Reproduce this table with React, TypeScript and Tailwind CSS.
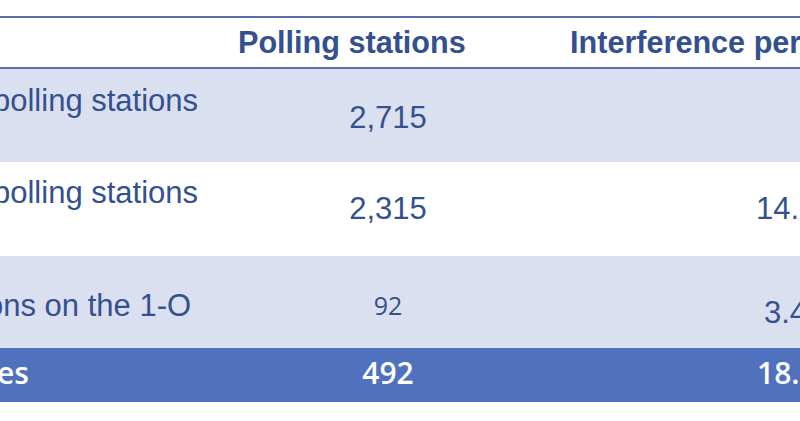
import React from 'react'

type Row = {
  label: string
  labelClass: string
  value: string
  valueClass: string
  pct: string
  pctClass: string
  rowClass: string
}

const arial = "font-['Liberation_Sans',Arial,sans-serif]"
const calibri = "font-['Open_Sans','Noto_Sans',sans-serif]"

const rows: Row[] = [
  {
    label: 'polling stations',
    labelClass: `${arial} text-[31px] ml-[-7px] pt-[16px]`,
    value: '2,715',
    valueClass: `${arial} text-[31px] pt-[33px]`,
    pct: '',
    pctClass: '',
    rowClass: 'h-[93px] bg-[#dbe0f1] text-[#34508f]',
  },
  {
    label: 'polling stations',
    labelClass: `${arial} text-[31px] ml-[-7px] pt-[15px]`,
    value: '2,315',
    valueClass: `${arial} text-[31px] pt-[31px]`,
    pct: '14.',
    pctClass: `${arial} text-[31px] pt-[31px] pl-[210px]`,
    rowClass: 'h-[94px] bg-white text-[#34508f]',
  },
  {
    label: 'ons on the 1-O',
    labelClass: `${arial} text-[31px] ml-[-14px] pt-[34px]`,
    value: '92',
    valueClass: `${calibri} text-[25px] pt-[37px]`,
    pct: '3.4',
    pctClass: `${arial} text-[31px] pt-[41px] pl-[218px]`,
    rowClass: 'h-[92px] bg-[#dbe0f1] text-[#34508f]',
  },
  {
    label: 'es',
    labelClass: `${calibri} text-[30px] font-semibold ml-[-3px] pt-[10px]`,
    value: '492',
    valueClass: `${calibri} text-[30px] font-semibold pt-[10px]`,
    pct: '18.',
    pctClass: `${calibri} text-[30px] font-semibold pt-[10px] pl-[211px]`,
    rowClass: 'h-[54px] bg-[#4f71be] text-white',
  },
]

export default function App() {
  return (
    <div className="w-[800px] h-[421px] bg-white overflow-hidden pt-4">
      <div className="border-t-2 border-b-2 border-[#5a6fac] h-[53px] flex items-center text-[#34508f]">
        <div className="w-[230px] shrink-0" />
        <div className={`w-[316px] shrink-0 pl-2 ${arial} font-bold text-[30.6px] leading-none whitespace-nowrap`}>
          Polling stations
        </div>
        <div className={`flex-1 pl-[24px] ${arial} font-bold text-[30.6px] leading-none whitespace-nowrap`}>
          Interference per
        </div>
      </div>
      {rows.map((r, i) => (
        <div key={i} className={`flex ${r.rowClass}`}>
          <div className="w-[230px] shrink-0 overflow-hidden">
            <div className={`${r.labelClass} leading-none whitespace-nowrap`}>{r.label}</div>
          </div>
          <div className={`w-[316px] shrink-0 text-center leading-none ${r.valueClass}`}>{r.value}</div>
          <div className={`flex-1 leading-none whitespace-nowrap ${r.pctClass}`}>{r.pct}</div>
        </div>
      ))}
    </div>
  )
}
